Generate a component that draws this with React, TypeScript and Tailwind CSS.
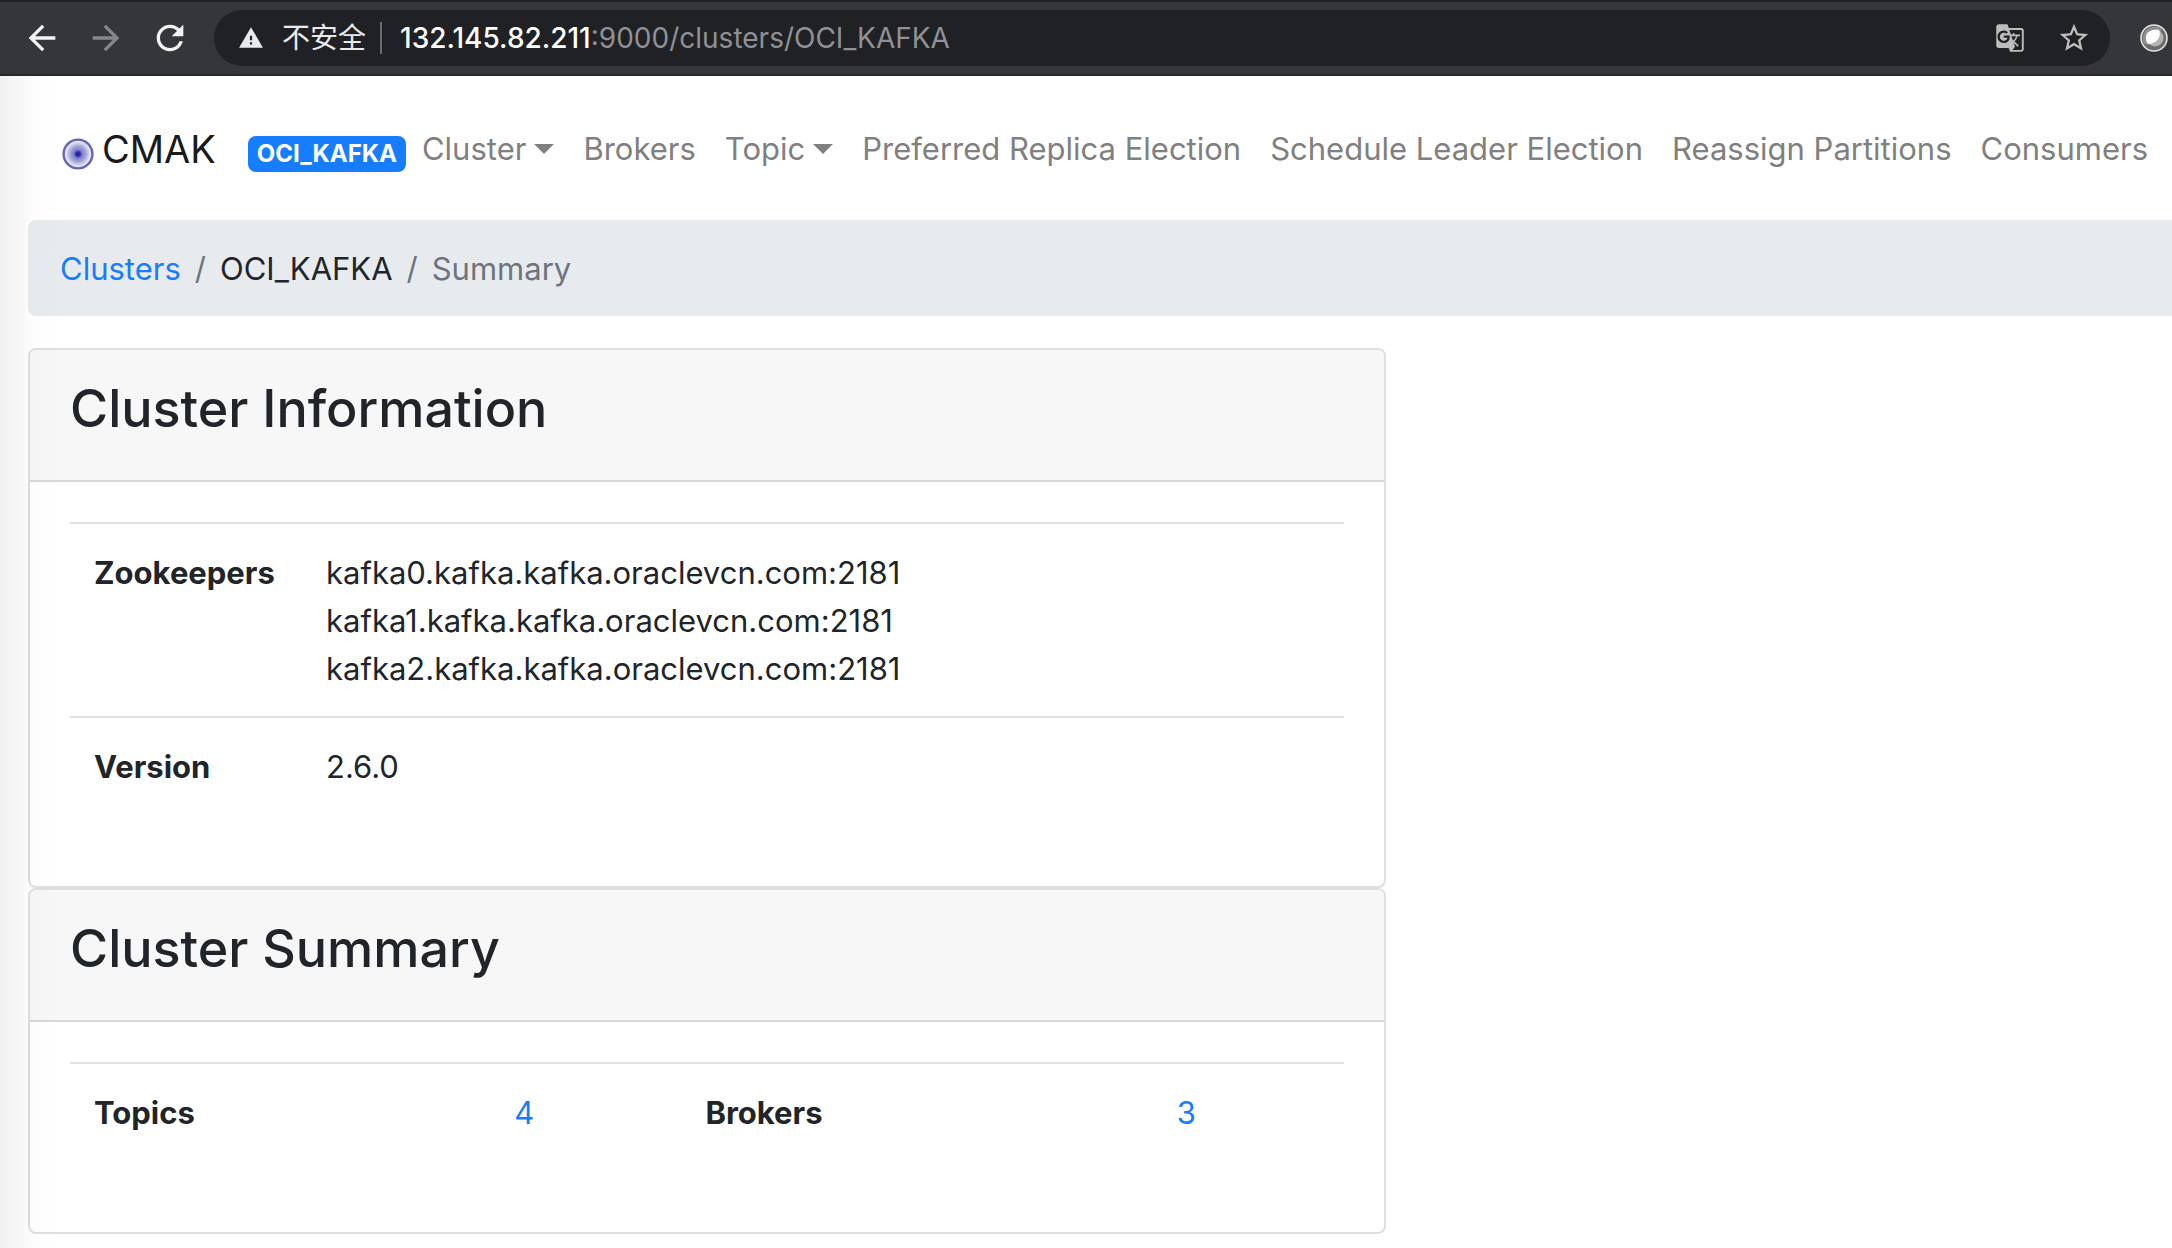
import type { ReactNode } from "react";
import {
  MdArrowBack,
  MdArrowForward,
  MdGTranslate,
  MdRefresh,
  MdStarOutline,
  MdWarning,
} from "react-icons/md";

function BrowserBar() {
  return (
    <header className="flex h-[76px] items-center border-t-2 border-b-2 border-t-[#202124] border-b-[#28282b] bg-[#35363a] pl-[22px] pr-1">
      <button aria-label="Back" className="text-[#f1f3f4]">
        <MdArrowBack size={40} />
      </button>
      <button aria-label="Forward" className="ml-6 text-[#86878a]">
        <MdArrowForward size={40} />
      </button>
      <button aria-label="Reload" className="ml-6 text-[#f1f3f4]">
        <MdRefresh size={40} />
      </button>
      <div className="ml-6 flex h-14 flex-1 items-center rounded-full bg-[#202124] pl-6 pr-[19px]">
        <button className="flex items-center text-[#e8eaed]">
          <MdWarning size={26} />
          <span className="ml-[18px] font-['Inter','Noto_Sans_CJK_SC',sans-serif] text-[28px] leading-8">
            不安全
          </span>
        </button>
        <span className="mr-4 ml-3.5 h-8 w-0.5 bg-[#6b6c6f]" />
        <div
          role="textbox"
          aria-label="Address"
          tabIndex={0}
          className="flex-1 pl-0.5 text-[28px] leading-8 whitespace-nowrap text-[#8f9194]"
        >
          <span className="font-medium text-white">132.145.82.211</span>:9000/clusters/OCI_KAFKA
        </div>
        <button aria-label="Translate this page" className="text-[#bdbdbd]">
          <MdGTranslate size={30} />
        </button>
        <button aria-label="Bookmark this page" className="ml-8 text-[#bdbdbd]">
          <MdStarOutline size={34} />
        </button>
      </div>
      <button aria-label="Extension" className="ml-[30px]">
        <svg width="28" height="28" viewBox="0 0 28 28">
          <circle cx="14" cy="14" r="13" fill="#6a6a68" stroke="#e4e4e2" strokeWidth="1.6" />
          <path d="M4 20A12 12 0 0 1 22 5L18 12L8 21Z" fill="#8f8f8d" />
          <circle cx="15" cy="14" r="8.5" fill="#b4b4b2" />
          <path d="M6 15C5 9 10 5 19 6C22 13 16 20 8 20C7 19 6 17 6 15Z" fill="#ffffff" />
        </svg>
      </button>
    </header>
  );
}

function Logo() {
  return (
    <svg className="mt-2.5" width="32" height="32" viewBox="0 0 32 32" aria-hidden="true">
      <defs>
        <radialGradient id="core">
          <stop offset="0" stopColor="#1a1aa0" />
          <stop offset="0.16" stopColor="#2e2ea8" />
          <stop offset="0.28" stopColor="#7d7dcb" />
          <stop offset="0.55" stopColor="#a5a5dc" />
          <stop offset="0.8" stopColor="#dcdcf2" />
          <stop offset="1" stopColor="#eeeef9" />
        </radialGradient>
      </defs>
      <circle cx="16" cy="16" r="14.4" fill="url(#core)" stroke="#6464b8" strokeWidth="2.4" />
    </svg>
  );
}

function NavLink({ children, menu = false }: { children: ReactNode; menu?: boolean }) {
  const style = "flex items-center whitespace-nowrap text-[#808080]";
  if (menu) {
    return (
      <button className={style}>
        {children}
        <span className="ml-2 border-x-[10px] border-t-[10px] border-x-transparent border-t-[#808080]" />
      </button>
    );
  }
  return (
    <a href="#" className={style}>
      {children}
    </a>
  );
}

function Card({ title, children }: { title: string; children: ReactNode }) {
  return (
    <section className="rounded-lg border-2 border-[#dfdfdf] bg-white">
      <div className="rounded-t-md border-b-2 border-[#d8d8d8] bg-[#f7f7f7] px-10 pt-[26px] pb-[38px]">
        <h2 className="text-[52px] leading-[66px] font-medium">{title}</h2>
      </div>
      <div className="p-10 pb-[72px]">{children}</div>
    </section>
  );
}

const zookeepers = [
  "kafka0.kafka.kafka.oraclevcn.com:2181",
  "kafka1.kafka.kafka.oraclevcn.com:2181",
  "kafka2.kafka.kafka.oraclevcn.com:2181",
];

export default function App() {
  return (
    <div className="min-h-screen bg-white font-['Inter',sans-serif] text-[#212529]">
      <BrowserBar />
      <div className="relative pb-3.5 pl-7 text-[31px] leading-[48px]">
        <nav className="flex h-36 items-center pt-0.5 pl-[34px]">
          <a href="#" className="flex items-center gap-2 text-[38px] leading-[60px] text-[#1a1a1a]">
            <Logo />
            CMAK
          </a>
          <span className="mt-2.5 ml-8 rounded-lg bg-[#177dff] px-[9px] text-2xl leading-9 font-bold text-white">
            OCI_KAFKA
          </span>
          <div className="ml-4 flex items-center gap-[29px]">
            <NavLink menu>Cluster</NavLink>
            <NavLink>Brokers</NavLink>
            <NavLink menu>Topic</NavLink>
            <NavLink>Preferred Replica Election</NavLink>
            <NavLink>Schedule Leader Election</NavLink>
            <NavLink>Reassign Partitions</NavLink>
            <NavLink>Consumers</NavLink>
          </div>
        </nav>

        <ol className="flex gap-3.5 rounded-l-lg bg-[#e8ebee] px-8 pt-[25px] pb-[23px]">
          <li>
            <a href="#" className="text-[#177dff]">
              Clusters
            </a>
          </li>
          <li className="text-[#6c757d]">/</li>
          <li>OCI_KAFKA</li>
          <li className="text-[#6c757d]">/</li>
          <li className="text-[#6c757d]">Summary</li>
        </ol>

        <main className="mt-8 grid grid-cols-[19fr_11fr]">
          <div>
            <Card title="Cluster Information">
              <table className="w-full text-left">
                <tbody>
                  <tr className="border-t-2 border-[#dee2e6]">
                    <th scope="row" className="w-[232px] px-6 pt-[25px] pb-[23px] align-top font-bold">
                      Zookeepers
                    </th>
                    <td className="px-6 pt-[25px] pb-[23px]">
                      {zookeepers.map((host) => (
                        <div key={host}>{host}</div>
                      ))}
                    </td>
                  </tr>
                  <tr className="border-t-2 border-[#dee2e6]">
                    <th scope="row" className="px-6 pt-[25px] pb-[23px] font-bold">
                      Version
                    </th>
                    <td className="px-6 pt-[25px] pb-[23px]">2.6.0</td>
                  </tr>
                </tbody>
              </table>
            </Card>
            <Card title="Cluster Summary">
              <table className="w-full table-fixed text-left">
                <tbody>
                  <tr className="border-t-2 border-[#dee2e6]">
                    <th scope="row" className="w-[33%] px-6 pt-[25px] pb-[23px] font-bold">
                      Topics
                    </th>
                    <td className="w-[15%] px-6 pt-[25px] pb-[23px]">
                      <a href="#" className="text-[#177dff]">
                        4
                      </a>
                    </td>
                    <th scope="row" className="w-[37%] px-6 pt-[25px] pb-[23px] font-bold">
                      Brokers
                    </th>
                    <td className="px-6 pt-[25px] pb-[23px]">
                      <a href="#" className="text-[#177dff]">
                        3
                      </a>
                    </td>
                  </tr>
                </tbody>
              </table>
            </Card>
          </div>
        </main>
        <div className="pointer-events-none absolute inset-y-0 left-0 w-16 bg-linear-to-r from-black/6 via-black/1 to-transparent" />
      </div>
    </div>
  );
}
